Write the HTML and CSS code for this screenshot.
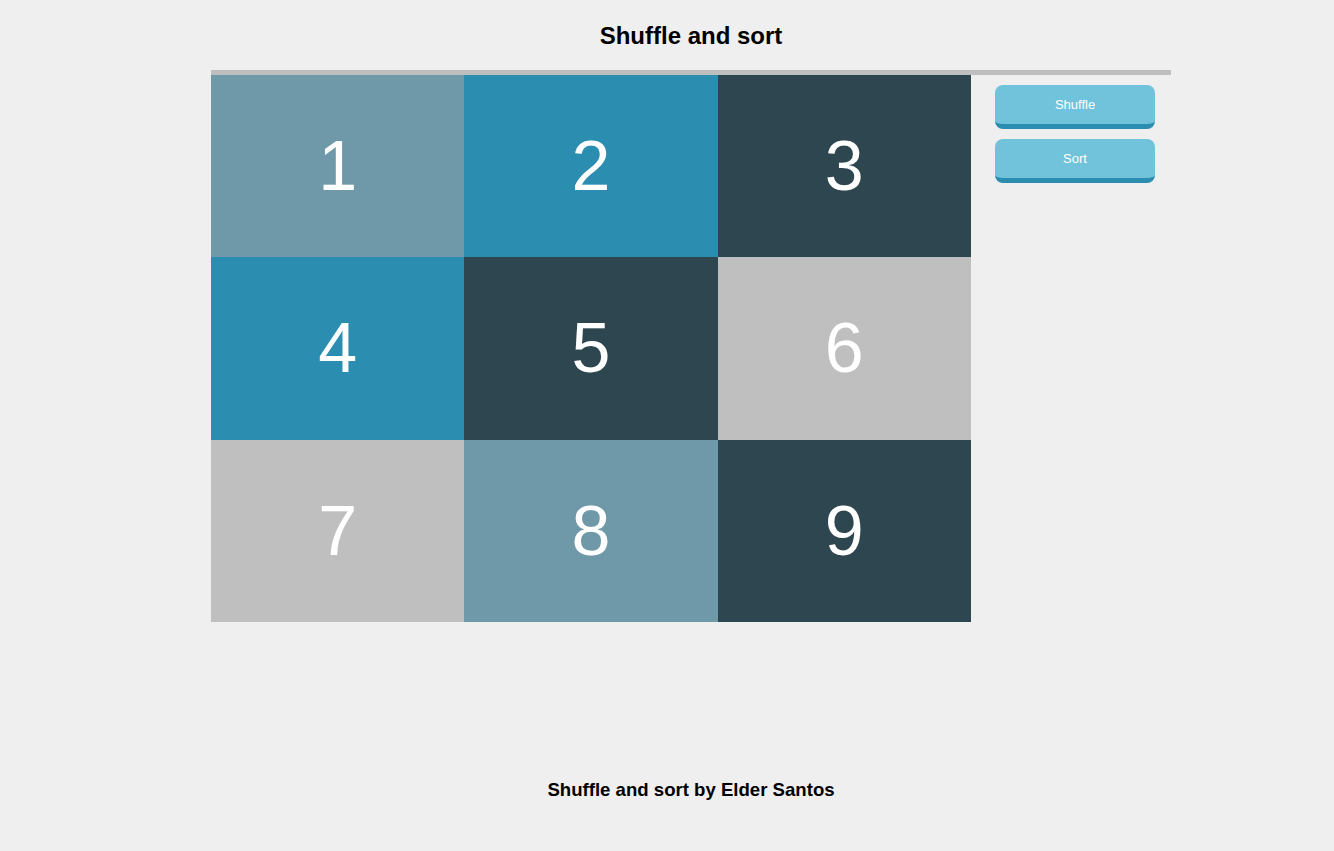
FILE: index.html
```html
<!DOCTYPE html>
<html>
<head>
<meta charset="utf-8">
<link rel="stylesheet" href="styles.css">
</head>
<body>
<header class="header"><h1 class="title">Shuffle and sort</h1></header>
<main class="wrap">
  <div class="grid">
    <div class="cell c-slate">1</div>
    <div class="cell c-teal">2</div>
    <div class="cell c-dark">3</div>
    <div class="cell c-teal">4</div>
    <div class="cell c-dark">5</div>
    <div class="cell c-gray">6</div>
    <div class="cell c-gray">7</div>
    <div class="cell c-slate">8</div>
    <div class="cell c-dark">9</div>
  </div>
  <aside class="side">
    <button class="btn">Shuffle</button>
    <button class="btn">Sort</button>
  </aside>
</main>
<footer class="footer">Shuffle and sort by Elder Santos</footer>
</body>
</html>
```
FILE: styles.css
```css
html, body { margin: 0; padding: 0; }
body {
  background: #efefef;
  font-family: "Liberation Sans", Arial, sans-serif;
  color: #000;
  padding-left: 48px;
}
.header {
  height: 70px;
  display: flex;
  align-items: center;
  justify-content: center;
}
.title {
  margin: 0;
  font-size: 24px;
  font-weight: bold;
  line-height: 1;
  padding-top: 2px;
}
.wrap {
  width: 960px;
  margin: 0 auto;
  border-top: 5px solid #bfbfbf;
  display: flex;
}
.grid {
  width: 760px;
  display: grid;
  grid-template-columns: repeat(3, 1fr);
  grid-template-rows: repeat(3, 182.33px);
}
.cell {
  display: flex;
  align-items: center;
  justify-content: center;
  color: #fff;
  font-size: 70px;
  line-height: 1;
}
.c-slate { background: #6f99a9; }
.c-teal { background: #2b8db0; }
.c-dark { background: #2e4650; }
.c-gray { background: #bfbfbf; }
.side {
  width: 200px;
  box-sizing: border-box;
  padding: 10px 16px 0 24px;
  display: flex;
  flex-direction: column;
  gap: 10px;
}
.btn {
  width: 160px;
  height: 44px;
  border: none;
  border-bottom: 5px solid #2b8db0;
  border-radius: 8px;
  background: #71c2db;
  color: #fff;
  font-family: "Liberation Sans", Arial, sans-serif;
  font-size: 13px;
  padding: 0;
  cursor: pointer;
}
.footer {
  margin-top: 158px;
  text-align: center;
  font-size: 18.6px;
  font-weight: bold;
  line-height: 20px;
}
```
